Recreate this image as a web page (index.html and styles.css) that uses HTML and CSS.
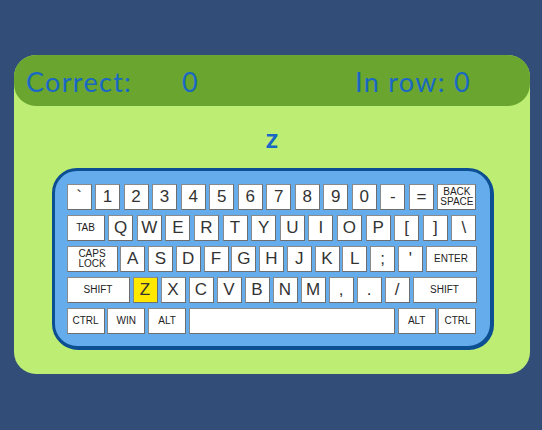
FILE: index.html
```html
<!DOCTYPE html>
<html>
<head>
<meta charset="utf-8">
<link rel="stylesheet" href="styles.css">
</head>
<body>
<div class="card">
  <div class="header">
    <span class="label">Correct:</span>
    <span class="score">0</span>
    <span class="streak">In row: 0</span>
  </div>
  <div class="target">z</div>
  <div class="keyboard">
    <div class="row">
      <div class="key">`</div><div class="key">1</div><div class="key">2</div><div class="key">3</div><div class="key">4</div><div class="key">5</div><div class="key">6</div><div class="key">7</div><div class="key">8</div><div class="key">9</div><div class="key">0</div><div class="key">-</div><div class="key">=</div><div class="key small backspace">BACK<br>SPACE</div>
    </div>
    <div class="row">
      <div class="key small tab">TAB</div><div class="key">Q</div><div class="key">W</div><div class="key">E</div><div class="key">R</div><div class="key">T</div><div class="key">Y</div><div class="key">U</div><div class="key">I</div><div class="key">O</div><div class="key">P</div><div class="key">[</div><div class="key">]</div><div class="key">\</div>
    </div>
    <div class="row">
      <div class="key small caps">CAPS<br>LOCK</div><div class="key">A</div><div class="key">S</div><div class="key">D</div><div class="key">F</div><div class="key">G</div><div class="key">H</div><div class="key">J</div><div class="key">K</div><div class="key">L</div><div class="key">;</div><div class="key">'</div><div class="key small enter">ENTER</div>
    </div>
    <div class="row">
      <div class="key small shift-l">SHIFT</div><div class="key active">Z</div><div class="key">X</div><div class="key">C</div><div class="key">V</div><div class="key">B</div><div class="key">N</div><div class="key">M</div><div class="key">,</div><div class="key">.</div><div class="key">/</div><div class="key small shift-r">SHIFT</div>
    </div>
    <div class="row">
      <div class="key small mod">CTRL</div><div class="key small mod">WIN</div><div class="key small mod">ALT</div><div class="key space"></div><div class="key small mod">ALT</div><div class="key small mod">CTRL</div>
    </div>
  </div>
</div>
</body>
</html>
```
FILE: styles.css
```css
html, body {
  margin: 0;
  padding: 0;
}
body {
  background: #324e78;
  width: 542px;
  height: 430px;
  overflow: hidden;
}
.card {
  margin: 55px 0 0 14px;
  width: 516px;
  height: 319px;
  background: #bdee73;
  border-radius: 22px;
}
.header {
  height: 51px;
  box-sizing: border-box;
  padding: 2px 59px 0 12px;
  background: #69a52f;
  border-radius: 22px;
  display: flex;
  align-items: center;
  font-family: Lato, "Noto Sans", sans-serif;
  font-size: 27px;
  letter-spacing: 1.3px;
  color: #1868c4;
}
.label {
  width: 156px;
}
.score {
  flex: 1;
}
.target {
  height: 62px;
  box-sizing: border-box;
  padding-top: 15px;
  line-height: 34px;
  text-align: center;
  font-family: Lato, "Noto Sans", sans-serif;
  font-weight: bold;
  font-size: 27px;
  color: #1868c4;
}
.keyboard {
  width: 410px;
  margin: 0 auto;
  padding: 13px 13px 12px 12px;
  background: #64acec;
  border: 3px solid #0d4f93;
  border-radius: 25px;
  box-shadow: 1px 1px 0 #0d4f93;
  display: flex;
  flex-direction: column;
  gap: 5px;
}
.row {
  display: flex;
  justify-content: space-between;
  height: 26px;
}
.key {
  width: 25px;
  height: 26px;
  box-sizing: border-box;
  background: #fff;
  border: 1px solid #8a8a8a;
  border-right-color: #6e6e6e;
  border-bottom-color: #6e6e6e;
  display: flex;
  align-items: center;
  justify-content: center;
  font-family: "Liberation Sans", Arial, sans-serif;
  font-size: 17px;
  color: #333;
}
.key.small {
  font-size: 10px;
  line-height: 10.5px;
  text-align: center;
  color: #222;
}
.key.active {
  background: #ffe800;
}
.backspace { width: 39px; }
.tab { width: 38px; }
.caps { width: 51px; }
.enter { width: 51px; }
.shift-l { width: 63px; }
.shift-r { width: 64px; }
.mod { width: 38px; }
.space { width: 206px; }
```
